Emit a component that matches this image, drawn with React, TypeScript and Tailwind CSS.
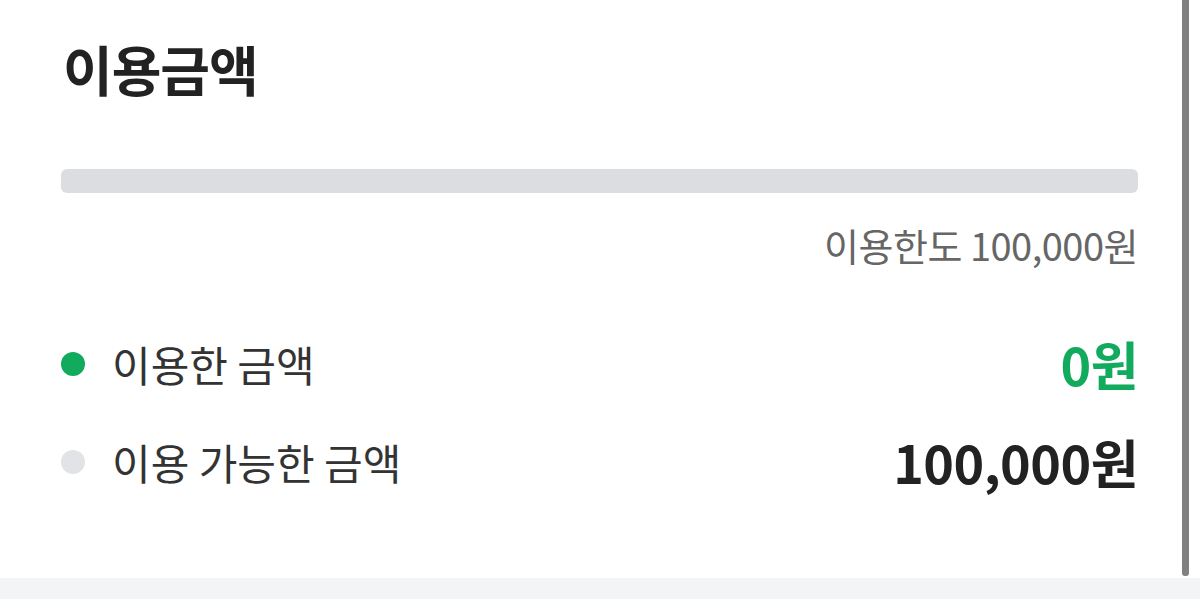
import React from 'react'

const font = { fontFamily: '"Noto Sans CJK KR", "Noto Sans", sans-serif' }

function Row({ dot, label, value, valueClass }: { dot: string; label: string; value: string; valueClass: string }) {
  return (
    <div className="flex items-center justify-between h-[98px]">
      <div className="flex items-center">
        <span className={`w-6 h-6 rounded-full ${dot}`} />
        <span className="ml-[27px] text-[42px] text-[#333] leading-[60px]">{label}</span>
      </div>
      <span className={`text-[52px] font-bold tracking-[-0.5px] leading-[60px] ${valueClass}`}>{value}</span>
    </div>
  )
}

export default function App() {
  return (
    <div className="relative w-[1200px] h-[599px] bg-white overflow-hidden" style={font}>
      <div className="h-[578px] pl-[61px] pr-[62px] pt-[33px]">
        <h1 className="text-[54px] font-bold text-[#222] leading-[72px] tracking-[-1px] pl-[2px]">이용금액</h1>

        <div className="mt-[64px] h-[24px] rounded-[6px] bg-[#dcdde0]" />

        <div className="mt-[28px] flex justify-end text-[38px] text-[#666] leading-[48px] tracking-[-0.5px]">
          이용한도 100,000원
        </div>

        <div className="mt-[46px]">
          <Row dot="bg-[#12ab5e]" label="이용한 금액" value="0원" valueClass="text-[#12ab5e]" />
          <Row dot="bg-[#e1e3e6]" label="이용 가능한 금액" value="100,000원" valueClass="text-[#222]" />
        </div>
      </div>
      <div className="h-[21px] bg-[#f2f4f6]" />

      {/* scroll thumb overlay */}
      <div className="absolute top-0 left-[1182px] w-[7px] h-[576px] rounded-b-[3px] bg-[#808080]" />
    </div>
  )
}
